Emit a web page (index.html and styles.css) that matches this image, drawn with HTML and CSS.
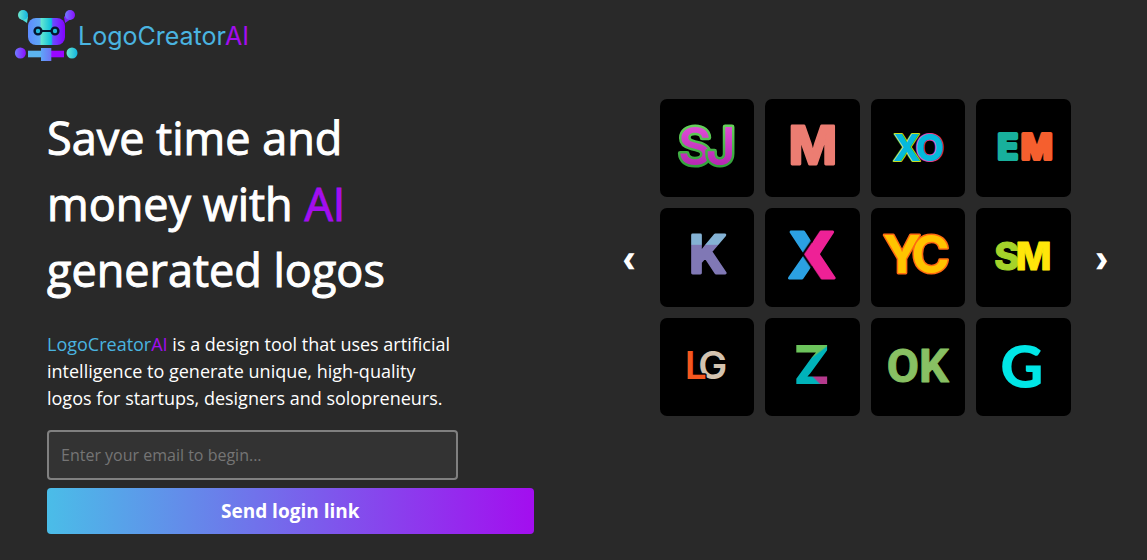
FILE: index.html
```
<!DOCTYPE html>
<html lang="en">
<head>
    <meta charset="UTF-8">
    <meta name="viewport" content="width=device-width, initial-scale=1.0">
    <title>LogoCreatorAI</title>
    <link rel="stylesheet" href="styles.css">
</head>
<body>
    <header class="header">
        <a class="brand" href="#">
            <svg class="robot" viewBox="0 0 64 54" aria-hidden="true">
                <defs>
                    <linearGradient id="head">
                        <stop offset="0" stop-color="#5d8bff" />
                        <stop offset="0.32" stop-color="#5fa8f5" />
                        <stop offset="0.36" stop-color="#62e6d2" />
                        <stop offset="0.63" stop-color="#0cc0dc" />
                        <stop offset="0.67" stop-color="#6a4cff" />
                        <stop offset="1" stop-color="#8400ff" />
                    </linearGradient>
                    <linearGradient id="teal">
                        <stop offset="0" stop-color="#6ce8cf" />
                        <stop offset="1" stop-color="#10b4e0" />
                    </linearGradient>
                    <linearGradient id="violet">
                        <stop offset="0" stop-color="#6f7dff" />
                        <stop offset="1" stop-color="#8a0cff" />
                    </linearGradient>
                    <linearGradient id="block">
                        <stop offset="0" stop-color="#5fa4f8" />
                        <stop offset="1" stop-color="#6f74f5" />
                    </linearGradient>
                </defs>
                <path d="M7 10 L13 14 L14 8 L12 5Z" fill="#4fdcd6" />
                <circle cx="9" cy="6" r="5" fill="url(#teal)" />
                <path d="M57 10 L51 14 L50 8 L53 5Z" fill="#7d20ff" />
                <circle cx="56" cy="6" r="5" fill="url(#violet)" />
                <rect x="14" y="9" width="37" height="27" rx="8" fill="url(#head)" />
                <path d="M24 22H41" stroke="#06162f" stroke-width="2" />
                <circle cx="24" cy="22" r="3.4" fill="#22b8d6" stroke="#06162f" stroke-width="2.4" />
                <circle cx="41" cy="22" r="3.4" fill="#22b8d6" stroke="#06162f" stroke-width="2.4" />
                <circle cx="6.4" cy="44" r="5.5" fill="url(#violet)" />
                <circle cx="58" cy="44" r="5.5" fill="url(#teal)" />
                <rect x="14" y="41.7" width="13" height="6.6" fill="#5cb4f0" />
                <rect x="37" y="41.7" width="13" height="6.6" fill="#9a06ff" />
                <rect x="27" y="39" width="10.3" height="13" fill="url(#block)" />
            </svg>
            <span class="brand-name">LogoCreator<span class="ai">AI</span></span>
        </a>
    </header>

    <main class="hero">
        <section class="intro">
            <h1>Save time and<br>money with <span class="ai">AI</span><br>generated logos</h1>
            <p><span class="logo-creator">LogoCreator</span><span class="ai">AI</span> is a design tool that uses artificial intelligence to generate unique, high-quality logos for startups, designers and solopreneurs.</p>
            <form class="login">
                <input type="email" name="email" aria-label="Email" placeholder="Enter your email to begin...">
                <button type="submit">Send login link</button>
            </form>
        </section>

        <section class="slider">
            <button class="arrow" type="button" aria-label="Previous">❮</button>
            <div class="logos">
                <svg class="tile" viewBox="0 0 95 99">
                    <defs>
                        <linearGradient id="green" gradientUnits="userSpaceOnUse" x1="0" y1="25" x2="0" y2="69">
                            <stop offset="0" stop-color="#68d35c" />
                            <stop offset="1" stop-color="#2f9f3a" />
                        </linearGradient>
                        <linearGradient id="pink" gradientUnits="userSpaceOnUse" x1="0" y1="25" x2="0" y2="69">
                            <stop offset="0" stop-color="#e250d8" />
                            <stop offset="1" stop-color="#b325b0" />
                        </linearGradient>
                    </defs>
                    <g class="sj">
                        <text x="35" y="66">S</text>
                        <text x="61" y="66">J</text>
                    </g>
                </svg>
                <svg class="tile" viewBox="0 0 95 99">
                    <text class="m" x="48" y="65">M</text>
                </svg>
                <svg class="tile" viewBox="0 0 95 99">
                    <g class="xo">
                        <text class="o" x="59" y="62">O</text>
                        <text class="x" x="36" y="62">X</text>
                    </g>
                </svg>
                <svg class="tile" viewBox="0 0 95 99">
                    <g class="em">
                        <text x="32" y="60" fill="#18b09c" stroke="#18b09c">E</text>
                        <text x="61" y="60" fill="#f55f2e" stroke="#f55f2e">M</text>
                    </g>
                </svg>
                <svg class="tile" viewBox="0 0 95 99">
                    <defs>
                        <pattern id="k-fill" patternUnits="userSpaceOnUse" width="95" height="99">
                            <rect width="95" height="99" fill="#8078b5" />
                            <rect width="95" height="37" fill="#84b2d4" />
                        </pattern>
                    </defs>
                    <text class="k" x="48" y="65">K</text>
                </svg>
                <svg class="tile" viewBox="0 0 95 99">
                    <defs>
                        <pattern id="x-fill" patternUnits="userSpaceOnUse" width="95" height="99">
                            <rect width="95" height="99" fill="#2ba1e3" />
                            <path d="M58 17L38 46.500L58 76H95V17Z" fill="#ee2196" stroke="#000" stroke-width="2" />
                        </pattern>
                    </defs>
                    <text class="x-mark" x="47" y="70">X</text>
                </svg>
                <svg class="tile" viewBox="0 0 95 99">
                    <g class="yc">
                        <text x="31" y="65">Y</text>
                        <text x="60" y="65">C</text>
                    </g>
                </svg>
                <svg class="tile" viewBox="0 0 95 99">
                    <g class="sm">
                        <text x="31" y="62" fill="#a5d32a" stroke="#a5d32a">S</text>
                        <text x="58" y="62" fill="#ffe60a" stroke="#ffe60a">M</text>
                    </g>
                </svg>
                <svg class="tile" viewBox="0 0 95 99">
                    <g class="lg">
                        <text x="53" y="61">G</text>
                        <text class="l" x="36" y="61">L</text>
                    </g>
                </svg>
                <svg class="tile" viewBox="0 0 95 99">
                    <defs>
                        <pattern id="z-fill" patternUnits="userSpaceOnUse" width="95" height="99">
                            <rect width="95" height="99" fill="#00b3ba" />
                            <path d="M0 0H95V10L63 28L47 40H0Z" fill="#6cc45c" />
                            <path d="M45 56H95V99H68L56 67Z" fill="#b53a8d" />
                        </pattern>
                    </defs>
                    <text class="z" x="47" y="66">Z</text>
                </svg>
                <svg class="tile" viewBox="0 0 95 99">
                    <text class="ok" x="47" y="64">OK</text>
                </svg>
                <svg class="tile" viewBox="0 0 95 99">
                    <text class="g" x="46" y="70">G</text>
                </svg>
            </div>
            <button class="arrow" type="button" aria-label="Next">❯</button>
        </section>
    </main>
</body>
</html>
```
FILE: styles.css
```
body {
    margin: 0;
    background-color: #292929;
    color: white;
    font-family: 'Open Sans', 'Noto Sans', sans-serif;
}

.header {
    height: 72px;
}

.brand {
    display: inline-flex;
    align-items: center;
    padding: 9px 14px;
    color: #4ab4e0;
    text-decoration: none;
}

.robot {
    width: 64px;
    height: 54px;
}

.brand-name {
    font-family: Inter, sans-serif;
    font-size: 25px;
}

.logo-creator {
    color: #4ab4e0;
}

.ai {
    color: #a30eef;
}

.hero {
    display: grid;
    grid-template-columns: 1fr 1fr;
    align-items: start;
}

.intro {
    padding: 33px 40px 24px 47px;
}

.intro h1 {
    margin: 0 0 28px;
    font-size: 45px;
    font-weight: 400;
    line-height: 66px;
    -webkit-text-stroke: 1px;
}

.intro p {
    margin: 0 0 18px;
    max-width: 411px;
    font-size: 18px;
    line-height: 27px;
}

.login {
    display: flex;
    flex-direction: column;
    gap: 8px;
}

.login input {
    box-sizing: border-box;
    width: 100%;
    max-width: 411px;
    height: 50px;
    padding: 0 12px;
    border: 2px solid #808080;
    border-radius: 4px;
    background-color: #333333;
    color: white;
    font-family: inherit;
    font-size: 16px;
}

.login input::placeholder {
    color: #757575;
}

.login button {
    height: 46px;
    border: none;
    border-radius: 4px;
    background: linear-gradient(to right, #4abde8, #a30eef);
    color: white;
    font-family: inherit;
    font-size: 19px;
    font-weight: 700;
    cursor: pointer;
}

.slider {
    display: flex;
    align-items: center;
    justify-content: center;
    gap: 21px;
    padding: 27px 0 0 10px;
}

.arrow {
    width: 20px;
    padding: 4px 0 0;
    border: none;
    background: none;
    color: white;
    font-family: 'DejaVu Sans', sans-serif;
    font-size: 14px;
    font-weight: 700;
    cursor: pointer;
    -webkit-text-stroke: 2px;
}

.logos {
    display: grid;
    flex: 0 1 411px;
    grid-template-columns: repeat(4, 1fr);
    gap: 11px;
}

.tile {
    display: block;
    width: 100%;
    border-radius: 7px;
    background-color: black;
}

/* lettering of the sample logos */
.tile text {
    font-family: Inter, sans-serif;
    font-weight: 800;
    text-anchor: middle;
    paint-order: stroke;
    stroke-linejoin: round;
    stroke-linecap: round;
}

.sj text {
    font-size: 52px;
    font-weight: 600;
    fill: url(#pink);
    stroke: url(#green);
    stroke-width: 5px;
}

.tile .m {
    font-size: 52px;
    font-weight: 700;
    fill: #ec7d72;
    stroke: #ec7d72;
    stroke-width: 3px;
}

.xo text {
    font-size: 37px;
    fill: #05b9dc;
    stroke-width: 2px;
}

.xo .x {
    stroke: #c4dc20;
}

.xo .o {
    stroke: #e0409c;
}

.em text {
    font-size: 34px;
    font-weight: 700;
    stroke-width: 4px;
}

.tile .k {
    font-size: 52px;
    font-weight: 700;
    fill: url(#k-fill);
    stroke: url(#k-fill);
    stroke-width: 3px;
}

.tile .x-mark {
    font-size: 63px;
    fill: url(#x-fill);
    stroke: url(#x-fill);
    stroke-width: 3px;
}

.yc text {
    font-size: 52px;
    font-weight: 700;
    fill: #ffc400;
    stroke: #ff6a10;
    stroke-width: 3px;
}

.sm text {
    font-size: 38px;
    stroke-width: 1px;
}

.lg text {
    font-size: 39px;
    font-weight: 600;
    fill: #d3c3b0;
    stroke: black;
    stroke-width: 3px;
}

.lg .l {
    fill: #f4571f;
}

.tile .z {
    font-size: 54px;
    fill: url(#z-fill);
}

.tile .ok {
    font-family: Roboto, sans-serif;
    font-size: 47px;
    font-weight: 700;
    fill: #88c063;
    stroke: #88c063;
}

.tile .g {
    font-family: Lato, sans-serif;
    font-size: 60px;
    font-weight: 900;
    fill: #00e6e6;
}

@media (max-width: 900px) {
    .hero {
        grid-template-columns: 1fr;
    }

    .slider {
        padding: 24px;
    }
}
```
